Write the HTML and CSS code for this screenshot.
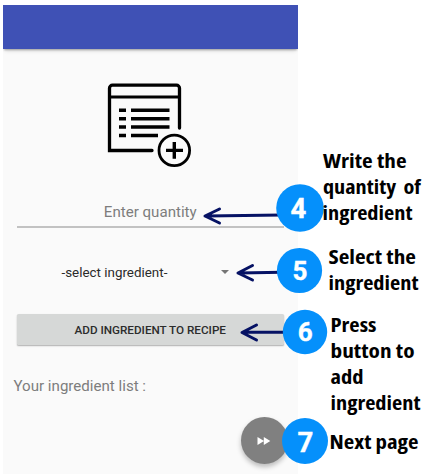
FILE: index.html
```html
<!DOCTYPE html>
<html lang="en">
<head>
<meta charset="utf-8">
<title>Add ingredient</title>
<link rel="stylesheet" href="styles.css">
</head>
<body>
<main class="phone">
  <header class="app-bar"></header>
  <section class="form">
    <svg class="list-icon" viewBox="0 0 86 86" fill="none" stroke="#000">
      <path d="M73.500 46V6.200a3 3 0 0 0-3-3h-64a3 3 0 0 0-3 3V68.500H46" stroke-width="3.300" stroke-linecap="round"/>
      <path d="M3.500 15H73.500" stroke-width="3"/>
      <path d="M13 28.200h7M25 28.200h38.500M13 36.700h7M25 36.700h38.500M13 45h7M25 45h38.500M13 53.500h7M25 53.500h27" stroke-width="3.500"/>
      <circle cx="68.300" cy="68.400" r="15.300" stroke-width="2.800"/>
      <path d="M60 68.400h17M68.300 60v16.800" stroke-width="3.400"/>
    </svg>
    <div class="quantity">Enter quantity</div>
    <div class="select"><span>-select ingredient-</span><i class="caret"></i></div>
    <button class="add">ADD INGREDIENT TO RECIPE</button>
    <p class="list-title">Your ingredient list :</p>
  </section>
  <div class="next">
    <svg width="14" height="10" viewBox="0 0 14 10"><path d="M.5 1v8L7 5zM6.800 1v8l6.500-4z" fill="#fff"/></svg>
  </div>
</main>
<svg class="callouts" width="427" height="474" viewBox="0 0 427 474">
  <g class="arrows">
    <path d="M282 215L206 216M219.500 209L205 216L219.500 223"/>
    <path d="M282 272.200L239 273M252.500 265.500L238 273L252.500 280"/>
    <path d="M288 332.300H243M256.500 325L242 332.500L256.500 340"/>
  </g>
  <g class="badges">
    <circle cx="300" cy="208" r="23.800"/>
    <circle cx="299.500" cy="270.500" r="22.600"/>
    <circle cx="305" cy="332" r="22.200"/>
    <circle cx="305" cy="441" r="23"/>
  </g>
  <g class="digits">
    <text x="298.500" y="218">4</text>
    <text x="300" y="279.500" class="small">5</text>
    <text x="305.300" y="341" class="small">6</text>
    <text x="305.500" y="452">7</text>
  </g>
  <g class="labels">
    <text x="323" y="168" textLength="83.500" lengthAdjust="spacingAndGlyphs">Write the</text>
    <text x="323" y="194" class="wide" textLength="98" lengthAdjust="spacingAndGlyphs">quantity of</text>
    <text x="322.500" y="220" textLength="90" lengthAdjust="spacingAndGlyphs">ingredient</text>
    <text x="328.500" y="264" textLength="87.500" lengthAdjust="spacingAndGlyphs">Select the</text>
    <text x="328.500" y="290" textLength="90" lengthAdjust="spacingAndGlyphs">ingredient</text>
    <text x="330.500" y="332" textLength="46" lengthAdjust="spacingAndGlyphs">Press</text>
    <text x="330.500" y="358" textLength="84" lengthAdjust="spacingAndGlyphs">button to</text>
    <text x="330.500" y="384" textLength="33" lengthAdjust="spacingAndGlyphs">add</text>
    <text x="330.500" y="410" textLength="90" lengthAdjust="spacingAndGlyphs">ingredient</text>
    <text x="329.500" y="449" textLength="89" lengthAdjust="spacingAndGlyphs">Next page</text>
  </g>
</svg>
</body>
</html>
```
FILE: styles.css
```css
* { box-sizing: border-box; }
body {
  margin: 0;
  width: 427px;
  height: 474px;
  padding: 5px 0 0 3px;
  overflow: hidden;
  position: relative;
  background: #fff;
  font-family: Roboto, sans-serif;
}
.phone {
  position: relative;
  width: 295px;
  height: 469px;
  background: #fafafa;
}
.app-bar {
  height: 44px;
  background: #3f51b5;
  box-shadow: 0 2px 2px -1px rgba(0, 0, 0, .3), 0 4px 4px -2px rgba(0, 0, 0, .12);
  clip-path: inset(0 0 -8px 0);
}
.form {
  display: flex;
  flex-direction: column;
  padding: 32.500px 14px 0 13.500px;
}
.list-icon {
  width: 86px;
  height: 86px;
  margin-left: 89.500px;
}
.quantity {
  height: 26px;
  margin-top: 34.500px;
  border-bottom: 2px solid #c2c2c2;
  text-align: center;
  font-size: 15.100px;
  line-height: 20px;
  color: #7d7d7d;
}
.select {
  display: flex;
  align-items: center;
  justify-content: space-between;
  height: 30px;
  margin: 29px 55px 0 45px;
  font-size: 13.400px;
  color: #2a2a2a;
}
.caret {
  border: 4px solid transparent;
  border-top-color: #757575;
  border-bottom: 0;
}
.add {
  height: 31px;
  margin-top: 27px;
  padding: 0;
  border: 0;
  border-radius: 1.500px;
  background: #d6d8d7;
  box-shadow: 0 1px 1.500px rgba(0, 0, 0, .3);
  font: 500 11.700px Roboto, sans-serif;
  color: #2c2c2c;
}
.list-title {
  margin: 31px 0 0 -3px;
  font-size: 15.100px;
  line-height: 20px;
  color: #7d7d7d;
}
.next {
  position: absolute;
  left: 237.500px;
  top: 412px;
  width: 47px;
  height: 47px;
  display: flex;
  align-items: center;
  justify-content: center;
  border-radius: 50%;
  background: #808080;
  box-shadow: 0 3px 5px rgba(0, 0, 0, .25);
}
.callouts { position: absolute; left: 0; top: 0; }
.arrows { fill: none; stroke: #061264; stroke-width: 3; stroke-linecap: round; stroke-linejoin: round; }
.badges { fill: #0590fb; }
.digits { fill: #fff; stroke: #fff; stroke-width: .4px; font: 700 27.500px Roboto, sans-serif; text-anchor: middle; }
.digits .small { font-size: 26px; }
.labels { fill: #000; font: 700 19.500px "Open Sans", sans-serif; font-stretch: 85%; }
.labels .wide { word-spacing: 3px; }
```
